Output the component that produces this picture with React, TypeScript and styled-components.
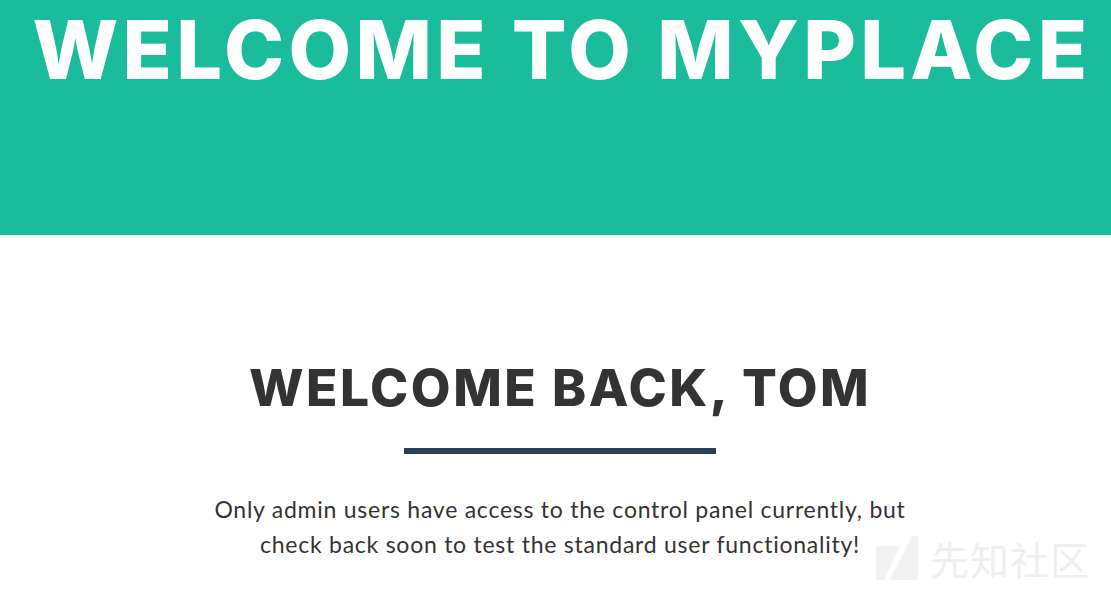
import React from "react";
import styled, { createGlobalStyle } from "styled-components";

const GlobalStyle = createGlobalStyle`
  html, body {
    margin: 0;
    padding: 0;
    background: #ffffff;
  }
  body {
    font-family: Lato, "Noto Sans", sans-serif;
    overflow: hidden;
  }
`;

const Page = styled.div`
  position: relative;
  width: 1111px;
  height: 594px;
  overflow: hidden;
`;

const Header = styled.header`
  background: #1abc9c;
  height: 235px;
  display: flex;
  flex-direction: column;
  align-items: center;
  box-sizing: border-box;
  padding: 10px 0 0 13px;
`;

const HeroTitle = styled.h1`
  margin: 0;
  color: #ffffff;
  font-family: Inter, "DejaVu Sans", sans-serif;
  font-weight: 800;
  font-size: 81px;
  line-height: 1;
  letter-spacing: 4.3px;
  white-space: nowrap;
`;

const Main = styled.section`
  display: flex;
  flex-direction: column;
  align-items: center;
  padding: 127px 0 0 9px;
`;

const SectionTitle = styled.h2`
  margin: 0;
  color: #333333;
  font-family: Inter, "DejaVu Sans", sans-serif;
  font-weight: 800;
  font-size: 51.5px;
  line-height: 1;
  letter-spacing: 2.5px;
  white-space: nowrap;
`;

const Divider = styled.hr`
  width: 312px;
  height: 6px;
  margin: 34px 0 0;
  border: none;
  background: #2c3e50;
`;

const Lead = styled.p`
  margin: 38px 0 0;
  width: 720px;
  text-align: center;
  color: #333333;
  font-family: Lato, sans-serif;
  font-size: 23px;
  line-height: 35px;
  letter-spacing: 0.75px;
`;

const Watermark = styled.div`
  position: absolute;
  right: 21px;
  bottom: 8px;
  display: flex;
  align-items: center;
  gap: 12px;
  color: #efefef;
  font-family: "Noto Sans CJK SC", sans-serif;
  font-size: 39px;
  letter-spacing: 1px;
  pointer-events: none;
`;

export default function App() {
  return (
    <Page>
      <GlobalStyle />
      <Header>
        <HeroTitle>WELCOME TO MYPLACE</HeroTitle>
      </Header>
      <Main>
        <SectionTitle>WELCOME BACK, TOM</SectionTitle>
        <Divider />
        <Lead>
          Only admin users have access to the control panel currently, but
          <br />
          check back soon to test the standard user functionality!
        </Lead>
      </Main>
      <Watermark>
        <svg width="42" height="44" viewBox="0 0 42 44">
          <polygon points="0,44 0,10 24,10 8,44" fill="#f2f2f2" />
          <polygon points="14,44 36,0 42,0 42,44" fill="#f2f2f2" />
        </svg>
        <span>先知社区</span>
      </Watermark>
    </Page>
  );
}
